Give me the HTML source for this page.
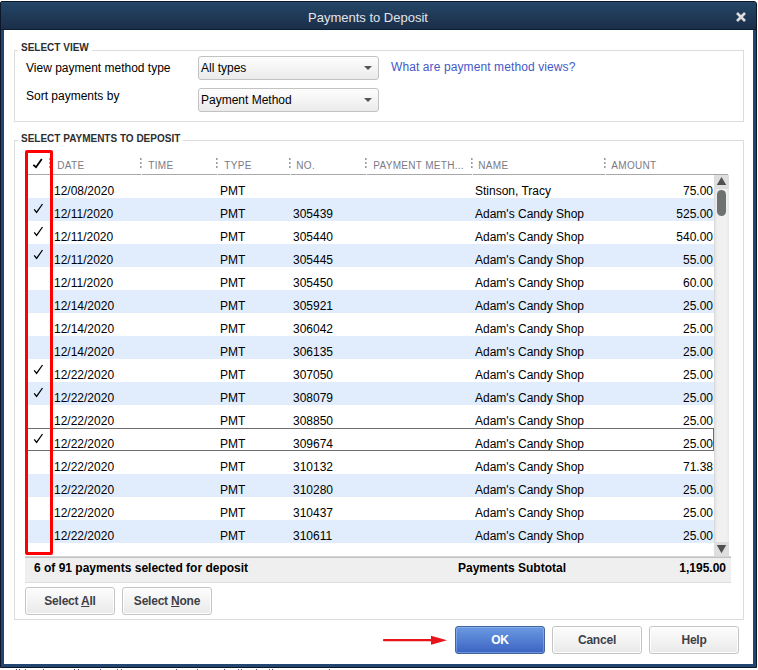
<!DOCTYPE html>
<html><head><meta charset="utf-8">
<style>
*{margin:0;padding:0;box-sizing:border-box}
html,body{width:758px;height:670px;overflow:hidden;background:#fff}
body{position:relative;font-family:"Liberation Sans",sans-serif;font-size:12px;color:#000}
.a{position:absolute}
.t{position:absolute;white-space:nowrap;line-height:1}
#frame{left:0;top:1px;width:757px;height:667px;background:#234670;border:1px solid #0c1828;border-radius:2px 3px 0 0}
#title{left:1px;top:2px;width:755px;height:28px;border-radius:1px 2px 0 0;background:linear-gradient(#244668,#1b2e48);border-bottom:1px solid #0a1e38}
#content{left:4px;top:30px;width:749px;height:634px;background:#fff}
.gb{position:absolute;border:1px solid #dcdcdc}
.gl{position:absolute;background:#fff;font-weight:bold;font-size:10px;color:#2e2e2e;padding:0 3px;line-height:12px}
.dd{position:absolute;border:1px solid #c2c2c2;border-radius:3px;background:linear-gradient(#fdfdfd,#ebebeb)}
.dd span{position:absolute;left:2px;top:5px;line-height:12px}
.arr{position:absolute;width:0;height:0;border-left:4px solid transparent;border-right:4px solid transparent;border-top:4px solid #555}
.hd{position:absolute;top:160.5px;font-size:10px;color:#7a7a88;line-height:10px;letter-spacing:0.3px}
.sep{position:absolute;top:158px;width:2px;height:10px;background:repeating-linear-gradient(transparent 0 2px,#fff 2px 4px),linear-gradient(to right,#9c9c9c 1px,#c4c4c4 1px)}
.row{position:absolute;left:28px;width:686px;height:23px}
.row.b{background:#e1edfd}
.c{position:absolute;top:10px;line-height:12px}
.btn{position:absolute;border:1px solid #c4c4c4;border-radius:3px;background:linear-gradient(#fdfdfd,#e9e9e9);font-weight:bold;font-size:12px;letter-spacing:-0.22px;color:#404048;text-align:center;line-height:26px;box-shadow:inset 0 0 0 1px #fff}
</style></head><body>
<div id="frame" class="a"></div>
<div id="title" class="a"></div>
<div class="t" style="left:308px;top:11px;font-size:13px;color:#e2e4e8">Payments to Deposit</div>
<svg class="a" style="left:735px;top:11px" width="12" height="12" viewBox="0 0 12 12"><path d="M2 2 L10 10 M10 2 L2 10" stroke="#dcdcdc" stroke-width="2.6"/></svg>
<div id="content" class="a"></div>

<!-- group 1 -->
<div class="gb" style="left:14px;top:50px;width:730px;height:72px"></div>
<div class="gl" style="left:18px;top:42px">SELECT VIEW</div>
<div class="t" style="left:26px;top:62px">View payment method type</div>
<div class="t" style="left:26px;top:90px">Sort payments by</div>
<div class="dd" style="left:198px;top:56px;width:181px;height:24px"><span>All types</span><div class="arr" style="left:165px;top:9px"></div></div>
<div class="dd" style="left:198px;top:88px;width:181px;height:24px"><span>Payment Method</span><div class="arr" style="left:165px;top:9px"></div></div>
<div class="t" style="left:391px;top:61px;color:#4459c8;letter-spacing:0.1px">What are payment method views?</div>

<!-- group 2 -->
<div class="gb" style="left:14px;top:140px;width:730px;height:480px"></div>
<div class="gl" style="left:18px;top:133px">SELECT PAYMENTS TO DEPOSIT</div>

<!-- header -->
<div class="a" style="left:27px;top:174px;width:701px;height:1px;background:#a8a8a8"></div><div class="a" style="left:141px;top:174px;width:1px;height:1px;background:#fff"></div><div class="a" style="left:217px;top:174px;width:1px;height:1px;background:#fff"></div><div class="a" style="left:290px;top:174px;width:1px;height:1px;background:#fff"></div><div class="a" style="left:366px;top:174px;width:1px;height:1px;background:#fff"></div><div class="a" style="left:472px;top:174px;width:1px;height:1px;background:#fff"></div><div class="a" style="left:605px;top:174px;width:1px;height:1px;background:#fff"></div>
<svg class="a" style="left:32px;top:158px" width="12" height="11" viewBox="0 0 12 11"><path d="M1.3 6.9 L4 9.2 L9.8 0.9" fill="none" stroke="#000" stroke-width="1.8"/></svg>
<div class="sep" style="left:49px"></div>
<div class="hd" style="left:57.3px">DATE</div>
<div class="sep" style="left:140px"></div>
<div class="hd" style="left:148.3px">TIME</div>
<div class="sep" style="left:216px"></div>
<div class="hd" style="left:224.3px">TYPE</div>
<div class="sep" style="left:289px"></div>
<div class="hd" style="left:296.3px">NO.</div>
<div class="sep" style="left:365px"></div>
<div class="hd" style="left:373.3px">PAYMENT METH...</div>
<div class="sep" style="left:471px"></div>
<div class="hd" style="left:478.3px">NAME</div>
<div class="sep" style="left:604px"></div>
<div class="hd" style="left:611.3px">AMOUNT</div>

<div id="rows">
<div class="row" style="top:175px"><span class="c" style="left:26px">12/08/2020</span><span class="c" style="left:192px">PMT</span><span class="c" style="left:447px">Stinson, Tracy</span><span class="c" style="right:1px">75.00</span></div>
<div class="row b" style="top:198px"><svg class="a" style="left:5px;top:5px" width="11" height="11" viewBox="0 0 11 11"><path d="M1.2 6.4 L3.6 9.4 L9.5 1.0" fill="none" stroke="#000" stroke-width="1.3"/></svg><span class="c" style="left:26px">12/11/2020</span><span class="c" style="left:192px">PMT</span><span class="c" style="left:265px">305439</span><span class="c" style="left:447px">Adam's Candy Shop</span><span class="c" style="right:1px">525.00</span></div>
<div class="row" style="top:221px"><svg class="a" style="left:5px;top:5px" width="11" height="11" viewBox="0 0 11 11"><path d="M1.2 6.4 L3.6 9.4 L9.5 1.0" fill="none" stroke="#000" stroke-width="1.3"/></svg><span class="c" style="left:26px">12/11/2020</span><span class="c" style="left:192px">PMT</span><span class="c" style="left:265px">305440</span><span class="c" style="left:447px">Adam's Candy Shop</span><span class="c" style="right:1px">540.00</span></div>
<div class="row b" style="top:244px"><svg class="a" style="left:5px;top:5px" width="11" height="11" viewBox="0 0 11 11"><path d="M1.2 6.4 L3.6 9.4 L9.5 1.0" fill="none" stroke="#000" stroke-width="1.3"/></svg><span class="c" style="left:26px">12/11/2020</span><span class="c" style="left:192px">PMT</span><span class="c" style="left:265px">305445</span><span class="c" style="left:447px">Adam's Candy Shop</span><span class="c" style="right:1px">55.00</span></div>
<div class="row" style="top:267px"><span class="c" style="left:26px">12/11/2020</span><span class="c" style="left:192px">PMT</span><span class="c" style="left:265px">305450</span><span class="c" style="left:447px">Adam's Candy Shop</span><span class="c" style="right:1px">60.00</span></div>
<div class="row b" style="top:290px"><span class="c" style="left:26px">12/14/2020</span><span class="c" style="left:192px">PMT</span><span class="c" style="left:265px">305921</span><span class="c" style="left:447px">Adam's Candy Shop</span><span class="c" style="right:1px">25.00</span></div>
<div class="row" style="top:313px"><span class="c" style="left:26px">12/14/2020</span><span class="c" style="left:192px">PMT</span><span class="c" style="left:265px">306042</span><span class="c" style="left:447px">Adam's Candy Shop</span><span class="c" style="right:1px">25.00</span></div>
<div class="row b" style="top:336px"><span class="c" style="left:26px">12/14/2020</span><span class="c" style="left:192px">PMT</span><span class="c" style="left:265px">306135</span><span class="c" style="left:447px">Adam's Candy Shop</span><span class="c" style="right:1px">25.00</span></div>
<div class="row" style="top:359px"><svg class="a" style="left:5px;top:5px" width="11" height="11" viewBox="0 0 11 11"><path d="M1.2 6.4 L3.6 9.4 L9.5 1.0" fill="none" stroke="#000" stroke-width="1.3"/></svg><span class="c" style="left:26px">12/22/2020</span><span class="c" style="left:192px">PMT</span><span class="c" style="left:265px">307050</span><span class="c" style="left:447px">Adam's Candy Shop</span><span class="c" style="right:1px">25.00</span></div>
<div class="row b" style="top:382px"><svg class="a" style="left:5px;top:5px" width="11" height="11" viewBox="0 0 11 11"><path d="M1.2 6.4 L3.6 9.4 L9.5 1.0" fill="none" stroke="#000" stroke-width="1.3"/></svg><span class="c" style="left:26px">12/22/2020</span><span class="c" style="left:192px">PMT</span><span class="c" style="left:265px">308079</span><span class="c" style="left:447px">Adam's Candy Shop</span><span class="c" style="right:1px">25.00</span></div>
<div class="row" style="top:405px"><span class="c" style="left:26px">12/22/2020</span><span class="c" style="left:192px">PMT</span><span class="c" style="left:265px">308850</span><span class="c" style="left:447px">Adam's Candy Shop</span><span class="c" style="right:1px">25.00</span></div>
<div class="row" style="top:428px"><svg class="a" style="left:5px;top:5px" width="11" height="11" viewBox="0 0 11 11"><path d="M1.2 6.4 L3.6 9.4 L9.5 1.0" fill="none" stroke="#000" stroke-width="1.3"/></svg><span class="c" style="left:26px">12/22/2020</span><span class="c" style="left:192px">PMT</span><span class="c" style="left:265px">309674</span><span class="c" style="left:447px">Adam's Candy Shop</span><span class="c" style="right:1px">25.00</span><div class="a" style="left:0;top:0;width:686px;height:23px;border:1px solid #6e6e6e;border-left:none"></div></div>
<div class="row" style="top:451px"><span class="c" style="left:26px">12/22/2020</span><span class="c" style="left:192px">PMT</span><span class="c" style="left:265px">310132</span><span class="c" style="left:447px">Adam's Candy Shop</span><span class="c" style="right:1px">71.38</span></div>
<div class="row b" style="top:474px"><span class="c" style="left:26px">12/22/2020</span><span class="c" style="left:192px">PMT</span><span class="c" style="left:265px">310280</span><span class="c" style="left:447px">Adam's Candy Shop</span><span class="c" style="right:1px">25.00</span></div>
<div class="row" style="top:497px"><span class="c" style="left:26px">12/22/2020</span><span class="c" style="left:192px">PMT</span><span class="c" style="left:265px">310437</span><span class="c" style="left:447px">Adam's Candy Shop</span><span class="c" style="right:1px">25.00</span></div>
<div class="row b" style="top:520px"><span class="c" style="left:26px">12/22/2020</span><span class="c" style="left:192px">PMT</span><span class="c" style="left:265px">310611</span><span class="c" style="left:447px">Adam's Candy Shop</span><span class="c" style="right:1px">25.00</span></div>
</div>

<!-- scrollbar -->
<div class="a" style="left:714px;top:175px;width:15px;height:381px;background:linear-gradient(to right,#d4d4d4 0,#e6e6e6 1.5px,#f0f0f0 3.5px,#f1f1f1 12px,#e8e8e8 15px)"></div>
<div class="a" style="left:714px;top:175px;width:15px;height:14px;background:#dedede"></div>
<svg class="a" style="left:714px;top:175px" width="15" height="14"><path d="M7.5 2 L12.2 10 L2.8 10 Z" fill="#505050"/></svg>
<div class="a" style="left:717px;top:190px;width:9px;height:26px;border-radius:4.5px;background:#6e7371"></div>
<div class="a" style="left:714px;top:542px;width:15px;height:14px;background:#dedede"></div>
<svg class="a" style="left:714px;top:542px" width="15" height="14"><path d="M2.8 3 L12.2 3 L7.5 11.2 Z" fill="#505050"/></svg>

<!-- footer -->
<div class="a" style="left:25px;top:556px;width:706px;height:27px;background:#efefef;border-top:1px solid #d6d6d6;border-bottom:1px solid #dedede"></div><div class="a" style="left:25px;top:557px;width:706px;height:1px;background:#c2c2c2"></div>
<div class="t" style="left:34px;top:562px;font-weight:bold">6 of 91 payments selected for deposit</div>
<div class="t" style="left:458px;top:562px;font-weight:bold">Payments Subtotal</div>
<div class="t" style="right:32px;top:562px;font-weight:bold">1,195.00</div>

<!-- red box -->
<div class="a" style="left:25px;top:150px;width:28px;height:405px;border:3px solid #ff0000;border-radius:2px"></div>

<!-- buttons -->
<div class="btn" style="left:25px;top:587px;width:90px;height:28px">Select <u>A</u>ll</div>
<div class="btn" style="left:122px;top:587px;width:90px;height:28px">Select <u>N</u>one</div>
<div class="btn" style="left:455px;top:626px;width:90px;height:28px;background:linear-gradient(#6b9ae2,#3c64c2);border-color:#45649a;color:#fff;box-shadow:inset 0 0 0 1px rgba(160,200,255,0.45)">OK</div>
<div class="btn" style="left:552px;top:626px;width:90px;height:28px">Cancel</div>
<div class="btn" style="left:649px;top:626px;width:90px;height:28px">Help</div>

<!-- arrow -->
<svg class="a" style="left:380px;top:633px" width="70" height="15" viewBox="0 0 70 15"><path d="M4 7.2 H52" stroke="#e8141c" stroke-width="2.2" stroke-linecap="round"/><path d="M51 2.8 L67 7.2 L51 11.8 Z" fill="#e8141c"/></svg>
<div class="a" style="left:16px;top:669px;width:1px;height:1px;background:#5a4a7a"></div><div class="a" style="left:19px;top:669px;width:1px;height:1px;background:#5a4a7a"></div><div class="a" style="left:25px;top:669px;width:1px;height:1px;background:#5a4a7a"></div><div class="a" style="left:43px;top:669px;width:1px;height:1px;background:#5a4a7a"></div><div class="a" style="left:74px;top:669px;width:1px;height:1px;background:#5a4a7a"></div><div class="a" style="left:78px;top:669px;width:1px;height:1px;background:#5a4a7a"></div><div class="a" style="left:100px;top:669px;width:1px;height:1px;background:#5a4a7a"></div><div class="a" style="left:117px;top:669px;width:1px;height:1px;background:#5a4a7a"></div><div class="a" style="left:121px;top:669px;width:1px;height:1px;background:#5a4a7a"></div><div class="a" style="left:176px;top:669px;width:1px;height:1px;background:#5a4a7a"></div><div class="a" style="left:197px;top:669px;width:1px;height:1px;background:#5a4a7a"></div><div class="a" style="left:224px;top:669px;width:1px;height:1px;background:#5a4a7a"></div><div class="a" style="left:238px;top:669px;width:1px;height:1px;background:#5a4a7a"></div><div class="a" style="left:241px;top:669px;width:1px;height:1px;background:#5a4a7a"></div><div class="a" style="left:256px;top:669px;width:1px;height:1px;background:#5a4a7a"></div><div class="a" style="left:269px;top:669px;width:1px;height:1px;background:#5a4a7a"></div><div class="a" style="left:272px;top:669px;width:1px;height:1px;background:#5a4a7a"></div><div class="a" style="left:329px;top:669px;width:1px;height:1px;background:#5a4a7a"></div>
</body></html>
